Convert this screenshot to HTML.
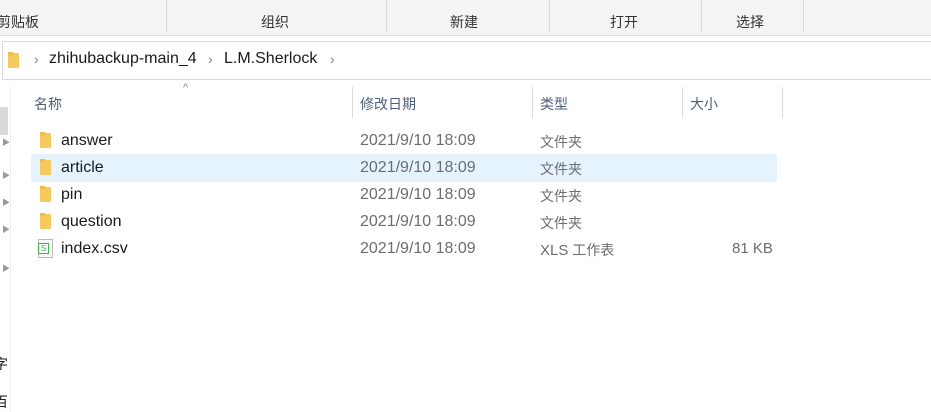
<!DOCTYPE html>
<html><head><meta charset="utf-8"><style>
body{margin:0;width:931px;height:412px;background:#fff;position:relative;overflow:hidden;font-family:"Liberation Sans","Noto Sans CJK SC",sans-serif;font-size:14px;color:#1a1a1a}
.a{position:absolute;white-space:nowrap}
.ribbon{left:0;top:0;width:931px;height:35px;background:#f3f4f6;border-bottom:1px solid #dcdcdc}
.vd{position:absolute;width:1px;background:#dadada}
.rl{top:12px;color:#333}
.addr{left:2px;top:41px;width:935px;height:37px;border:1px solid #d9d9d9;background:#fff}
.chev{color:#808080;font-size:14px}
.hd{top:94px;color:#4c607a}
.row{font-size:16px}
.dt{color:#6d6d6d;font-size:16px}
.ty{color:#6d6d6d;font-size:14px}
.fold{position:absolute;width:11px;height:15px;background:#f5c95b;border-radius:1px}
.fold:before{content:"";position:absolute;left:0;top:-1px;width:5px;height:3px;background:#f0be48}
</style></head><body>
<div class="a ribbon"></div>
<div class="vd" style="left:166px;top:0;height:32px"></div>
<div class="vd" style="left:386px;top:0;height:32px"></div>
<div class="vd" style="left:549px;top:0;height:32px"></div>
<div class="vd" style="left:701px;top:0;height:32px"></div>
<div class="vd" style="left:803px;top:0;height:32px"></div>
<div class="a rl" style="left:-3px">剪贴板</div>
<div class="a rl" style="left:261px">组织</div>
<div class="a rl" style="left:450px">新建</div>
<div class="a rl" style="left:610px">打开</div>
<div class="a rl" style="left:736px">选择</div>
<div class="a addr"></div>
<div class="fold" style="left:8px;top:53px;width:11px"></div>
<div class="a chev" style="left:34px;top:51px">›</div>
<div class="a" style="left:49px;top:50px;font-size:16px">zhihubackup-main_4</div>
<div class="a chev" style="left:208px;top:51px">›</div>
<div class="a" style="left:224px;top:50px;font-size:16px">L.M.Sherlock</div>
<div class="a chev" style="left:330px;top:51px">›</div>
<div class="a" style="left:0;top:107px;width:8px;height:28px;background:#d9d9d9"></div>
<div class="vd" style="left:10px;top:87px;height:325px;background:#eee"></div>
<div class="a" style="left:2px;top:137px;color:#999;font-size:8px">▶</div>
<div class="a" style="left:2px;top:170px;color:#999;font-size:8px">▶</div>
<div class="a" style="left:2px;top:197px;color:#999;font-size:8px">▶</div>
<div class="a" style="left:2px;top:224px;color:#999;font-size:8px">▶</div>
<div class="a" style="left:2px;top:263px;color:#999;font-size:8px">▶</div>
<div class="a" style="left:-6px;top:354px">字</div>
<div class="a" style="left:-6px;top:392px">百</div>
<div class="a" style="left:183px;top:82px;color:#888;font-size:11px">^</div>
<div class="a hd" style="left:34px">名称</div>
<div class="vd" style="left:352px;top:87px;height:31px"></div>
<div class="a hd" style="left:360px">修改日期</div>
<div class="vd" style="left:532px;top:87px;height:31px"></div>
<div class="a hd" style="left:540px">类型</div>
<div class="vd" style="left:682px;top:87px;height:31px"></div>
<div class="a hd" style="left:690px">大小</div>
<div class="vd" style="left:782px;top:87px;height:31px"></div>
<div class="a" style="left:31px;top:154px;width:746px;height:28px;background:#e5f3ff"></div>
<div class="fold" style="left:40px;top:133px"></div>
<div class="fold" style="left:40px;top:160px"></div>
<div class="fold" style="left:40px;top:187px"></div>
<div class="fold" style="left:40px;top:214px"></div>
<div class="a" style="left:38px;top:239px;width:13px;height:17px;border:1px solid #bbb;background:#fafafa"></div>
<div class="a" style="left:38px;top:243px;width:9px;height:9px;border:1px solid #3cb44a;color:#3cb44a;font-size:8px;line-height:9px;text-align:center">S</div>
<div class="a row" style="left:61px;top:132px">answer</div>
<div class="a row" style="left:61px;top:159px">article</div>
<div class="a row" style="left:61px;top:186px">pin</div>
<div class="a row" style="left:61px;top:213px">question</div>
<div class="a row" style="left:61px;top:240px">index.csv</div>
<div class="a dt" style="left:360px;top:132px">2021/9/10 18:09</div>
<div class="a dt" style="left:360px;top:159px">2021/9/10 18:09</div>
<div class="a dt" style="left:360px;top:186px">2021/9/10 18:09</div>
<div class="a dt" style="left:360px;top:213px">2021/9/10 18:09</div>
<div class="a dt" style="left:360px;top:240px">2021/9/10 18:09</div>
<div class="a ty" style="left:540px;top:132px">文件夹</div>
<div class="a ty" style="left:540px;top:159px">文件夹</div>
<div class="a ty" style="left:540px;top:186px">文件夹</div>
<div class="a ty" style="left:540px;top:213px">文件夹</div>
<div class="a ty" style="left:540px;top:240px"><span style="font-size:15px">XLS</span> 工作表</div>
<div class="a dt" style="left:732px;top:240px;font-size:15px">81 KB</div>
</body></html>
